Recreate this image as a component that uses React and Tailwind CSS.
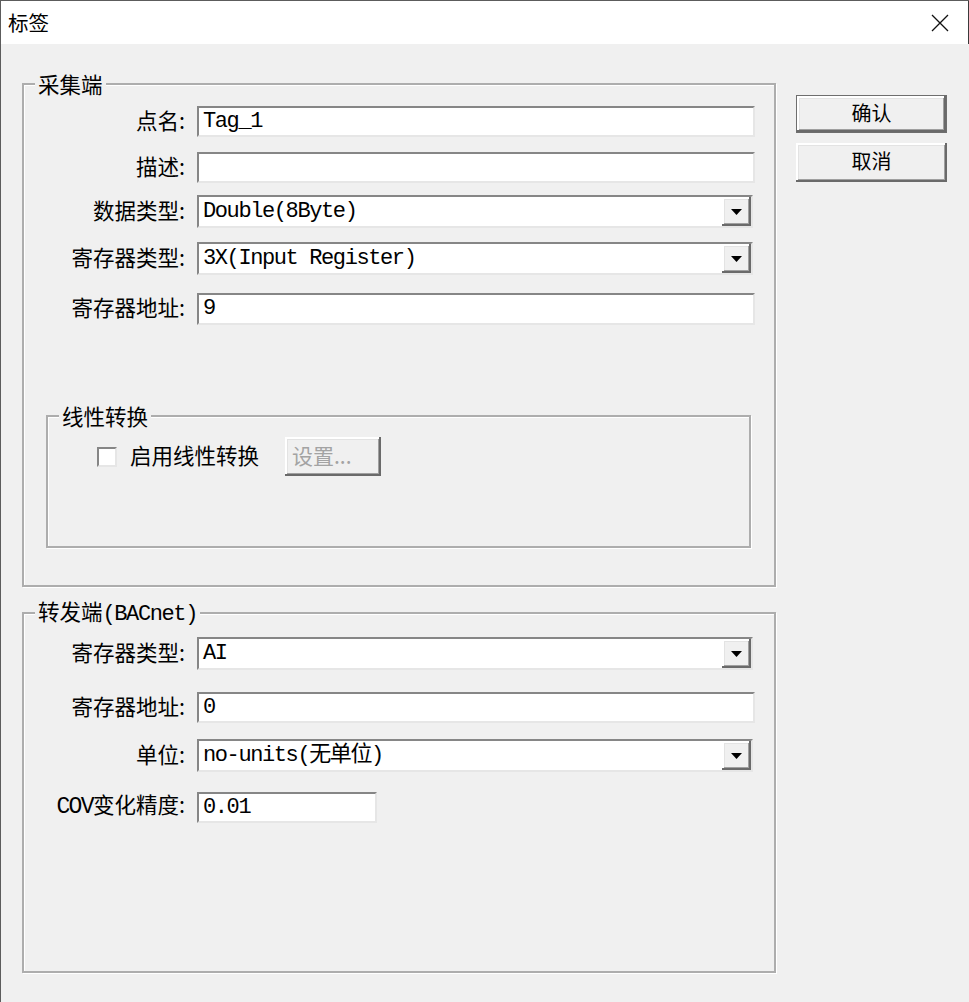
import React from "react";

const CJK = "font-['Noto_Sans_CJK_SC',sans-serif]";
const MONO = "font-['Liberation_Mono','Noto_Sans_CJK_SC',monospace]";
const sunken =
  "bg-white border-t-2 border-l-2 border-b-2 border-r-2 border-t-[#868686] border-l-[#868686] border-b-[#e6e6e6] border-r-[#e6e6e6]";
const raised =
  "bg-[#f0f0f0] shadow-[inset_-2px_-2px_0_#6a6a6a,inset_2px_2px_0_#ffffff,inset_-3px_-3px_0_#a0a0a0,inset_3px_3px_0_#e3e3e3]";

function Label({ children }) {
  return (
    <div className={`w-[161px] pb-[4px] text-right text-[21.5px] leading-none text-black ${CJK}`}>
      {children}
    </div>
  );
}

function TextField({ value, w = "w-[558px]", h = "h-[31px]" }) {
  return (
    <div
      className={`${sunken} ${w} ${h} ml-[12px] flex items-center pl-[4px] text-[22px] tracking-[-1.4px] leading-none text-black ${MONO}`}
    >
      {value}
    </div>
  );
}

function Combo({ value }) {
  return (
    <div className={`${sunken} w-[556px] h-[33px] ml-[12px] flex items-stretch`}>
      <div
        className={`flex-1 flex items-center pl-[4px] text-[22px] tracking-[-1.4px] leading-none text-black ${MONO}`}
      >
        {value}
      </div>
      <div className={`${raised} w-[29px] flex items-center justify-center`}>
        <svg width="11" height="6" viewBox="0 0 11 6">
          <path d="M0 0 H11 L5.5 6 Z" fill="#000" />
        </svg>
      </div>
    </div>
  );
}

function Group({ title, className, children }) {
  return (
    <div
      className={`border-2 border-[#adadad] shadow-[inset_1px_1px_0_#ffffff,1px_1px_0_#ffffff] flex flex-col ${className}`}
    >
      <div
        className={`-mt-[14px] ml-[11px] px-[3px] h-[26px] flex items-center self-start bg-[#f0f0f0] text-[21.5px] leading-none text-black ${CJK}`}
      >
        {title}
      </div>
      {children}
    </div>
  );
}

export default function App() {
  return (
    <div className="w-[969px] h-[1002px] bg-[#f0f0f0] border-l border-t border-[#5c5c5c] flex flex-col overflow-hidden">
      {/* Title bar */}
      <div className="h-[43px] bg-white border-r border-[#3a3a3a] flex items-center justify-between pl-[7px] pr-[19px]">
        <div className={`text-[20.5px] leading-none text-black ${CJK}`}>标签</div>
        <svg width="18" height="18" viewBox="0 0 18 18" className="mt-[1px]">
          <path d="M1 1 L17 17 M17 1 L1 17" stroke="#111" strokeWidth="1.3" />
        </svg>
      </div>

      {/* Body */}
      <div className="flex-1 flex items-start pl-[21px] pt-[39px]">
        <div className="w-[754px] flex flex-col">
          <Group title="采集端" className="h-[504px]">
            <div className="mt-[9px] flex items-center">
              <Label>点名:</Label>
              <TextField value="Tag_1" />
            </div>
            <div className="mt-[15px] flex items-center">
              <Label>描述:</Label>
              <TextField value="" />
            </div>
            <div className="mt-[12px] flex items-center">
              <Label>数据类型:</Label>
              <Combo value="Double(8Byte)" />
            </div>
            <div className="mt-[14px] flex items-center">
              <Label>寄存器类型:</Label>
              <Combo value="3X(Input Register)" />
            </div>
            <div className="mt-[18px] flex items-center">
              <Label>寄存器地址:</Label>
              <TextField value="9" h="h-[32px]" />
            </div>

            <Group title="线性转换" className="mt-[90px] ml-[22px] w-[705px] h-[133px]">
              <div className="mt-[8px] pl-[49px] flex items-center">
                <div className={`${sunken} w-[20px] h-[20px]`} />
                <div className={`ml-[13px] pb-[3px] text-[21.5px] leading-none text-black ${CJK}`}>
                  启用线性转换
                </div>
                <div
                  className={`${raised} ml-[26px] w-[96px] h-[39px] flex items-center pl-[7px] pb-[3px] text-[21px] leading-none text-[#a3a3a3] ${CJK}`}
                >
                  设置...
                </div>
              </div>
            </Group>
          </Group>

          <Group
            title={
              <span className="leading-none">
                转发端
                <span className="font-['Liberation_Mono',monospace] text-[22px] tracking-[-1.4px] leading-none">
                  (BACnet)
                </span>
              </span>
            }
            className="mt-[25px] h-[361px]"
          >
            <div className="mt-[11px] flex items-center">
              <Label>寄存器类型:</Label>
              <Combo value="AI" />
            </div>
            <div className="mt-[22px] flex items-center">
              <Label>寄存器地址:</Label>
              <TextField value="0" />
            </div>
            <div className="mt-[16px] flex items-center">
              <Label>单位:</Label>
              <Combo value="no-units(无单位)" />
            </div>
            <div className="mt-[20px] flex items-center">
              <Label>
                <span className="font-['Liberation_Mono',monospace] text-[23px] tracking-[-1.6px]">COV</span>
                变化精度:
              </Label>
              <TextField value="0.01" w="w-[180px]" />
            </div>
          </Group>
        </div>

        {/* Right buttons */}
        <div className="ml-[20px] mt-[12px] flex flex-col">
          <div
            className={`${raised} border border-[#6e6e6e] w-[151px] h-[38px] flex items-center justify-center pb-[3px] text-[20px] leading-none text-black ${CJK}`}
          >
            确认
          </div>
          <div
            className={`${raised} mt-[10px] w-[151px] h-[39px] flex items-center justify-center pb-[3px] text-[20px] leading-none text-black ${CJK}`}
          >
            取消
          </div>
        </div>
      </div>
    </div>
  );
}
